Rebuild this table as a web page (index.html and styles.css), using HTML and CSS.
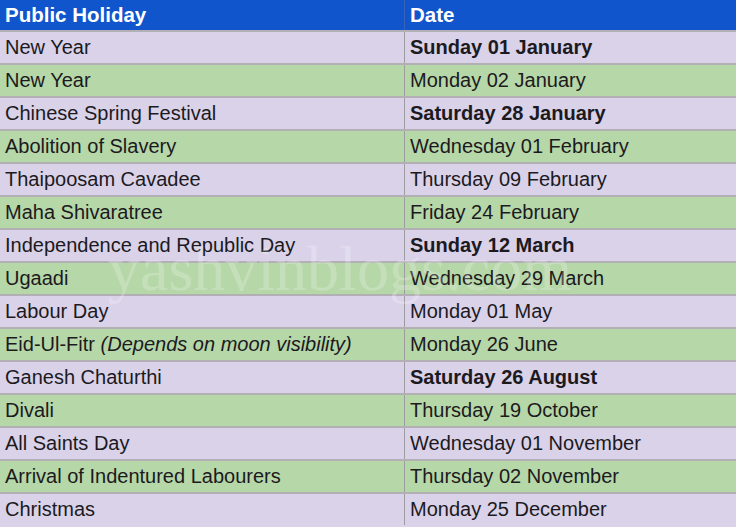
FILE: index.html
```html
<!DOCTYPE html>
<html>
<head>
<meta charset="utf-8">
<link rel="stylesheet" href="styles.css">
</head>
<body>
<div class="wrap">
<table class="holidays">
  <thead>
    <tr><th class="c1">Public Holiday</th><th class="c2">Date</th></tr>
  </thead>
  <tbody>
    <tr class="p"><td>New Year</td><td class="b">Sunday 01 January</td></tr>
    <tr class="g"><td>New Year</td><td>Monday 02 January</td></tr>
    <tr class="p"><td>Chinese Spring Festival</td><td class="b">Saturday 28 January</td></tr>
    <tr class="g"><td>Abolition of Slavery</td><td>Wednesday 01 February</td></tr>
    <tr class="p"><td>Thaipoosam Cavadee</td><td>Thursday 09 February</td></tr>
    <tr class="g"><td>Maha Shivaratree</td><td>Friday 24 February</td></tr>
    <tr class="p"><td>Independence and Republic Day</td><td class="b">Sunday 12 March</td></tr>
    <tr class="g"><td>Ugaadi</td><td>Wednesday 29 March</td></tr>
    <tr class="p"><td>Labour Day</td><td>Monday 01 May</td></tr>
    <tr class="g"><td>Eid-Ul-Fitr <i>(Depends on moon visibility)</i></td><td>Monday 26 June</td></tr>
    <tr class="p"><td>Ganesh Chaturthi</td><td class="b">Saturday 26 August</td></tr>
    <tr class="g"><td>Divali</td><td>Thursday 19 October</td></tr>
    <tr class="p"><td>All Saints Day</td><td>Wednesday 01 November</td></tr>
    <tr class="g"><td>Arrival of Indentured Labourers</td><td>Thursday 02 November</td></tr>
    <tr class="p"><td>Christmas</td><td>Monday 25 December</td></tr>
  </tbody>
</table>
<div class="watermark">yashvinblogs.com</div>
</div>
</body>
</html>
```
FILE: styles.css
```css
html, body {
  margin: 0;
  padding: 0;
  background: #d9d2e9;
}
.wrap {
  position: relative;
  width: 736px;
  height: 527px;
  overflow: hidden;
}
.holidays {
  border-collapse: collapse;
  width: 736px;
  table-layout: fixed;
  font-family: "Liberation Sans", Arial, sans-serif;
  font-size: 20px;
  color: #1c1a1e;
}
.holidays th {
  background: #1155cc;
  color: #ffffff;
  font-weight: bold;
  font-size: 20.5px;
  text-align: left;
  height: 30px;
  padding: 0 0 0 5px;
  border-right: 1px solid #3a62b8;
  vertical-align: middle;
}
.holidays th.c1 { width: 399px; }
.holidays th.c2 { border-right: none; }
.holidays td {
  height: 31px;
  padding: 0 0 0 5px;
  border-top: 2px solid #b3b0b5;
  border-right: 1px solid #9e9ca0;
  vertical-align: middle;
  white-space: nowrap;
}
.holidays td:last-child { border-right: none; }
.holidays tr.p td { background: #d9d2e9; }
.holidays tr.g td { background: #b6d7a8; }
.holidays td.b { font-weight: bold; }
.watermark {
  position: absolute;
  left: 108px;
  top: 232px;
  font-family: "Liberation Serif", "Times New Roman", serif;
  font-size: 64px;
  color: rgba(255, 255, 255, 0.22);
  pointer-events: none;
  white-space: nowrap;
}
```
